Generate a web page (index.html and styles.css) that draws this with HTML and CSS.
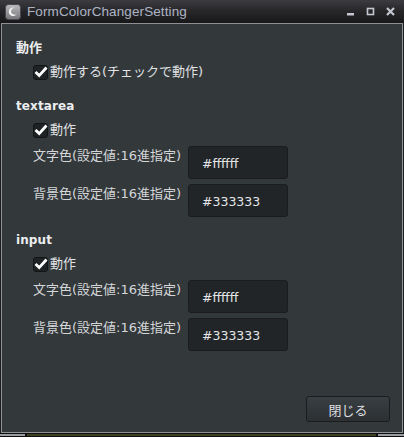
FILE: index.html
```html
<!DOCTYPE html>
<html lang="ja">
<head>
<meta charset="utf-8">
<title>FormColorChangerSetting</title>
<link rel="stylesheet" href="styles.css">
</head>
<body>
<div class="frame">
  <div class="titlebar">
    <div class="app-icon">
      <svg width="16" height="16" viewBox="0 0 16 16">
        <defs>
          <linearGradient id="ig" x1="0" y1="0" x2="0" y2="1">
            <stop offset="0" stop-color="#bcbcc0"/>
            <stop offset="1" stop-color="#76767a"/>
          </linearGradient>
        </defs>
        <rect x="0.5" y="0.5" width="15" height="15" rx="3" fill="url(#ig)" stroke="#4a4a4e"/>
        <path d="M10.5 4.2 A4.3 4.3 0 1 0 12 9.5 A3 3 0 0 1 8.2 10.3 A2.6 2.6 0 0 1 10.5 4.2 Z" fill="#f4f4f4"/>
      </svg>
    </div>
    <div class="title">FormColorChangerSetting</div>
    <div class="controls">
      <svg width="9" height="9" viewBox="0 0 9 9"><rect x="1" y="6" width="7" height="2.5" fill="#c4c6d0"/></svg>
      <svg width="9" height="9" viewBox="0 0 9 9"><rect x="1.5" y="1.5" width="6" height="6" fill="none" stroke="#c4c6d0" stroke-width="1.6"/></svg>
      <svg width="9" height="9" viewBox="0 0 9 9"><path d="M1 1 L8 8 M8 1 L1 8" stroke="#c4c6d0" stroke-width="2.2"/></svg>
    </div>
  </div>
  <div class="window">
    <div class="content">
      <div class="heading h-first">動作</div>
      <label class="check">
        <span class="box"><svg width="14" height="12" viewBox="0 0 14 12"><path d="M1.5 6 L5.2 9.6 L12.5 1.5" fill="none" stroke="#ffffff" stroke-width="2.8"/></svg></span>
        <span>動作する(チェックで動作)</span>
      </label>

      <div class="heading latin">textarea</div>
      <label class="check">
        <span class="box"><svg width="14" height="12" viewBox="0 0 14 12"><path d="M1.5 6 L5.2 9.6 L12.5 1.5" fill="none" stroke="#ffffff" stroke-width="2.8"/></svg></span>
        <span>動作</span>
      </label>
      <div class="fields">
        <div class="label">文字色(設定値:16進指定)</div>
        <div class="input">#ffffff</div>
        <div class="label">背景色(設定値:16進指定)</div>
        <div class="input">#333333</div>
      </div>

      <div class="heading latin h-after">input</div>
      <label class="check">
        <span class="box"><svg width="14" height="12" viewBox="0 0 14 12"><path d="M1.5 6 L5.2 9.6 L12.5 1.5" fill="none" stroke="#ffffff" stroke-width="2.8"/></svg></span>
        <span>動作</span>
      </label>
      <div class="fields">
        <div class="label">文字色(設定値:16進指定)</div>
        <div class="input">#ffffff</div>
        <div class="label">背景色(設定値:16進指定)</div>
        <div class="input">#333333</div>
      </div>
    </div>
    <div class="footer">
      <button class="btn">閉じる</button>
    </div>
  </div>
  <div class="strip">
    <div class="seg-l"></div>
    <div class="seg-m"></div>
    <div class="seg-r"></div>
  </div>
</div>
</body>
</html>
```

FILE: styles.css
```css
html, body {
  margin: 0;
  padding: 0;
  background: #1c1d1f;
}
body {
  width: 404px;
  height: 437px;
  overflow: hidden;
  font-family: "DejaVu Sans", "Noto Sans CJK JP", sans-serif;
  font-size: 13px;
  color: #d8dadc;
}
.frame {
  display: flex;
  flex-direction: column;
  height: 437px;
}
.titlebar {
  height: 23px;
  flex: none;
  display: flex;
  align-items: center;
  background: linear-gradient(#3c3c40, #262629 50%, #18181a);
}
.app-icon {
  width: 16px;
  height: 16px;
  margin-left: 5px;
  display: flex;
}
.title {
  margin-left: 6px;
  font-family: "Liberation Sans", sans-serif;
  font-size: 13.5px;
  color: #aeb4c4;
  flex: 1;
  letter-spacing: 0.1px;
}
.controls {
  display: flex;
  gap: 11px;
  margin-right: 9px;
  align-items: center;
}
.controls svg {
  display: block;
}
.window {
  flex: 1;
  display: flex;
  flex-direction: column;
  background: #33383b;
  border: 1px solid #8e9094;
  margin: 0 1px;
}
.content {
  padding: 14px 0 0 14px;
  display: flex;
  flex-direction: column;
}
.heading {
  font-weight: bold;
  color: #eceef0;
  line-height: 20px;
  margin-top: 14px;
}
.heading.latin {
  font-size: 12px;
  letter-spacing: 0.1px;
}
.heading.h-first {
  margin-top: 0;
}
.heading.h-after {
  margin-top: 13px;
}
.check {
  display: flex;
  align-items: center;
  gap: 2px;
  margin-left: 17px;
  margin-top: 4px;
  line-height: 20px;
  color: #e0e2e4;
}
.box {
  position: relative;
  width: 13px;
  height: 13px;
  border: 1px solid #121416;
  border-radius: 3px;
  background: #1f2224;
}
.box svg {
  position: absolute;
  left: 0;
  top: 0;
  display: block;
}
.fields {
  display: grid;
  grid-template-columns: 155px 100px;
  row-gap: 5px;
  margin-left: 17px;
  margin-top: 6px;
}
.label {
  line-height: 16px;
  padding-top: 2px;
  color: #d4d6d8;
}
.input {
  box-sizing: border-box;
  height: 33px;
  border: 1px solid #1a1c1e;
  border-radius: 3px;
  background: #222528;
  display: flex;
  align-items: center;
  padding-left: 13px;
  padding-top: 2px;
  font-size: 12.5px;
  color: #e4e6e8;
}
.footer {
  margin-top: auto;
  display: flex;
  justify-content: flex-end;
  padding: 0 12px 10px 0;
}
.btn {
  width: 84px;
  height: 26px;
  border: 1px solid #1a1c1e;
  border-radius: 3px;
  background: linear-gradient(#3a3f43, #2c3033);
  color: #dcdee0;
  font-family: "DejaVu Sans", "Noto Sans CJK JP", sans-serif;
  font-size: 13px;
  padding: 0;
}
.strip {
  height: 4px;
  flex: none;
  display: flex;
  align-items: flex-start;
  background: #0e0f0e;
}
.seg-l {
  width: 25px;
  height: 2px;
  margin-top: 1px;
  background: #9a9ca4;
}
.seg-m {
  flex: 1;
  height: 2px;
  margin: 1px 2px 0;
  background: #3a4220;
}
.seg-r {
  width: 26px;
  height: 2px;
  margin-top: 1px;
  background: #9a9ca4;
}
```
